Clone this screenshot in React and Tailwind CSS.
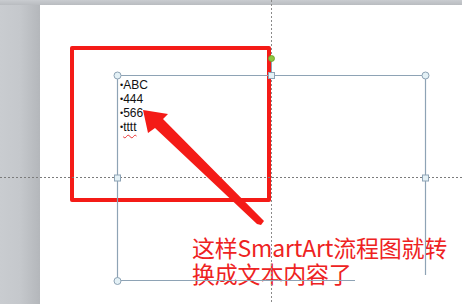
import React from "react";

export default function App() {
  return (
    <div className="relative w-[462px] h-[304px] overflow-hidden bg-[#c7cacf] font-['Liberation_Sans',Arial,sans-serif]">
      <div className="flex flex-col h-full">
        <div className="h-[5px] bg-gradient-to-b from-[#c9ccd0] to-[#b9bcc0]" />
        <div className="flex flex-1">
          <div className="w-[40px] bg-gradient-to-r from-[#c9ccd0] via-[#c5c8cc] to-[#b4b7bb]" />
          <div className="relative flex-1 bg-white">
            {/* red frame */}
            <div className="absolute left-[30px] top-[41px] w-[201px] h-[156px] border-[4px] border-[#f41b17] rounded-[2px]" />
            {/* bulleted text */}
            <div className="absolute left-[80px] top-[73px] flex flex-col text-[12px] leading-[14px] text-[#111]">
              <div><span className="text-[9px] align-[1px]">•</span>ABC</div>
              <div><span className="text-[9px] align-[1px]">•</span>444</div>
              <div><span className="text-[9px] align-[1px]">•</span>566</div>
              <div><span className="text-[9px] align-[1px]">•</span><span className="underline decoration-wavy decoration-[#e83030] decoration-[1px] underline-offset-[3px]">tttt</span></div>
            </div>
            {/* caption */}
            <div className="absolute left-[152px] top-[229px] flex flex-col text-[23px] leading-[26px] tracking-[-0.2px] text-[#ee2222] font-['Noto_Sans_CJK_SC',sans-serif] whitespace-nowrap">
              <div>这样SmartArt流程图就转</div>
              <div>换成文本内容了</div>
            </div>
          </div>
        </div>
      </div>
      <svg className="absolute inset-0 pointer-events-none" width="462" height="304" viewBox="0 0 462 304">
        {/* guides */}
        <line x1="0" y1="177.5" x2="462" y2="177.5" stroke="#7b7b7b" strokeWidth="1" strokeDasharray="2 2" />
        <line x1="271.5" y1="0" x2="271.5" y2="304" stroke="#8a8a8a" strokeWidth="1" strokeDasharray="2 2" />
        {/* text box frame */}
        <line x1="117.5" y1="75.5" x2="425.5" y2="75.5" stroke="#8ea3b5" strokeWidth="1.2" />
        <line x1="117.5" y1="75.5" x2="117.5" y2="281" stroke="#8ea3b5" strokeWidth="1.2" />
        <line x1="425.5" y1="75.5" x2="425.5" y2="275" stroke="#8ea3b5" strokeWidth="1.2" />
        <line x1="117.5" y1="280.5" x2="355" y2="280.5" stroke="#8ea3b5" strokeWidth="1.2" />
        {/* rotation handle */}
        <line x1="271.5" y1="60" x2="271.5" y2="73" stroke="#8ea3b5" strokeWidth="1" />
        <circle cx="271.5" cy="58.5" r="3" fill="#8cc63f" stroke="#6a9a2a" strokeWidth="0.8" />
        {/* corner handles */}
        <circle cx="117.5" cy="75.5" r="3.5" fill="#e4f1f6" stroke="#8ea3b5" strokeWidth="1" />
        <circle cx="425.5" cy="75.5" r="3.5" fill="#e4f1f6" stroke="#8ea3b5" strokeWidth="1" />
        <circle cx="117.5" cy="281" r="3.5" fill="#e4f1f6" stroke="#8ea3b5" strokeWidth="1" />
        {/* side handles */}
        <rect x="268.5" y="72.5" width="6" height="6" fill="#e4f1f6" stroke="#8ea3b5" strokeWidth="1" />
        <rect x="114.5" y="175" width="6" height="6" fill="#e4f1f6" stroke="#8ea3b5" strokeWidth="1" />
        <rect x="422.5" y="175" width="6" height="6" fill="#e4f1f6" stroke="#8ea3b5" strokeWidth="1" />
        {/* arrow */}
        <polygon
          points="143,110 168,114 163,119 264,221 261,225 257,224 155,128 148,133"
          fill="#f41b17"
        />
      </svg>
    </div>
  );
}
